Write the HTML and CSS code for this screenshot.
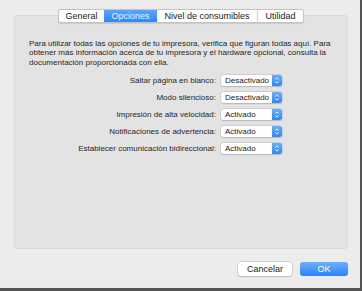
FILE: index.html
```html
<!DOCTYPE html>
<html lang="es">
<head>
<meta charset="utf-8">
<link rel="stylesheet" href="styles.css">
</head>
<body>
<div class="window">
  <div class="tabs">
    <div class="tab t-general">General</div>
    <div class="tab t-opciones active">Opciones</div>
    <div class="tab t-nivel">Nivel de consumibles</div>
    <div class="tab t-util">Utilidad</div>
  </div>
  <div class="panel">
    <p class="intro">Para utilizar todas las opciones de tu impresora, verifica que figuran todas aquí. Para obtener más información acerca de tu impresora y el hardware opcional, consulta la documentación proporcionada con ella.</p>
    <div class="rows">
      <div class="row"><span class="label">Saltar página en blanco:</span><span class="popup"><span class="val">Desactivado</span><span class="step"><svg viewBox="0 0 10 11" width="10" height="11"><path d="M3.3 4.4 L5 2.9 L6.7 4.4 M3.3 6.6 L5 8.1 L6.7 6.6" fill="none" stroke="#fff" stroke-width="0.9"/></svg></span></span></div>
      <div class="row"><span class="label">Modo silencioso:</span><span class="popup"><span class="val">Desactivado</span><span class="step"><svg viewBox="0 0 10 11" width="10" height="11"><path d="M3.3 4.4 L5 2.9 L6.7 4.4 M3.3 6.6 L5 8.1 L6.7 6.6" fill="none" stroke="#fff" stroke-width="0.9"/></svg></span></span></div>
      <div class="row"><span class="label">Impresión de alta velocidad:</span><span class="popup"><span class="val">Activado</span><span class="step"><svg viewBox="0 0 10 11" width="10" height="11"><path d="M3.3 4.4 L5 2.9 L6.7 4.4 M3.3 6.6 L5 8.1 L6.7 6.6" fill="none" stroke="#fff" stroke-width="0.9"/></svg></span></span></div>
      <div class="row"><span class="label">Notificaciones de advertencia:</span><span class="popup"><span class="val">Activado</span><span class="step"><svg viewBox="0 0 10 11" width="10" height="11"><path d="M3.3 4.4 L5 2.9 L6.7 4.4 M3.3 6.6 L5 8.1 L6.7 6.6" fill="none" stroke="#fff" stroke-width="0.9"/></svg></span></span></div>
      <div class="row"><span class="label">Establecer comunicación bidireccional:</span><span class="popup"><span class="val">Activado</span><span class="step"><svg viewBox="0 0 10 11" width="10" height="11"><path d="M3.3 4.4 L5 2.9 L6.7 4.4 M3.3 6.6 L5 8.1 L6.7 6.6" fill="none" stroke="#fff" stroke-width="0.9"/></svg></span></span></div>
    </div>
  </div>
  <div class="buttons">
    <div class="btn cancel">Cancelar</div>
    <div class="btn ok">OK</div>
  </div>
</div>
</body>
</html>
```
FILE: styles.css
```css
html, body {
  margin: 0;
  padding: 0;
}
body {
  font-family: "Liberation Sans", Arial, sans-serif;
  color: #262626;
}
.window {
  width: 362px;
  height: 291px;
  box-sizing: border-box;
  background: #ececec;
  border-right: 2px solid #555;
  border-bottom: 3px solid #555;
  padding-top: 9px;
  display: flex;
  flex-direction: column;
}
.tabs {
  position: relative;
  z-index: 1;
  align-self: flex-start;
  margin-left: 58px;
  display: flex;
  height: 14px;
  box-sizing: border-box;
  background: #fff;
  border: 1px solid #c4c4c4;
  border-radius: 3px;
  box-shadow: 0 0.5px 1px rgba(0,0,0,0.12);
  font-size: 9px;
}
.tab {
  display: flex;
  align-items: center;
  justify-content: center;
  box-sizing: border-box;
  border-left: 1px solid #d0d0d0;
  color: #222;
}
.tab:first-child { border-left: none; }
.t-general { width: 45px; }
.t-opciones { width: 53px; }
.t-nivel { width: 100px; }
.t-util { width: 46px; }
.tab.active {
  background: linear-gradient(#5aa5fa, #2f87f7);
  color: #eaf3ff;
  border-left: none;
}
.tab.active + .tab { border-left: none; }
.panel {
  margin: -8px 0 0 14px;
  width: 334px;
  height: 234px;
  box-sizing: border-box;
  background: #e3e3e3;
  border: 1px solid #dadada;
  border-radius: 3px;
  padding: 23px 0 0 14px;
}
.intro {
  margin: 0;
  width: 305px;
  font-size: 8px;
  line-height: 9.3px;
  color: #262626;
}
.rows {
  margin-top: 5px;
  display: flex;
  flex-direction: column;
}
.row {
  height: 17.1px;
  display: flex;
  align-items: center;
  font-size: 8px;
}
.label {
  width: 187px;
  text-align: right;
  margin-right: 5px;
}
.popup {
  width: 61px;
  height: 11px;
  box-sizing: border-box;
  background: #fff;
  border-radius: 2.5px;
  box-shadow: 0 0 0 0.5px #bdbdbd, 0 0.5px 1px rgba(0,0,0,0.2);
  display: flex;
  align-items: center;
  justify-content: space-between;
}
.val {
  padding-left: 4px;
  font-size: 8px;
  color: #222;
}
.step {
  width: 10px;
  height: 11px;
  background: linear-gradient(#67aefb, #2f86f6);
  border-radius: 0 2.5px 2.5px 0;
  display: flex;
}
.buttons {
  margin-top: 13px;
  display: flex;
  justify-content: flex-end;
  gap: 8px;
  padding-right: 12px;
}
.btn {
  height: 14px;
  box-sizing: border-box;
  border-radius: 3px;
  display: flex;
  align-items: center;
  justify-content: center;
  font-size: 9px;
}
.cancel {
  width: 54px;
  background: #fff;
  box-shadow: 0 0 0 0.5px #bcbcbc, 0 0.5px 1px rgba(0,0,0,0.2);
  color: #222;
}
.ok {
  width: 48px;
  background: linear-gradient(#6cb0fc, #2c84f7);
  color: #fff;
}
```
